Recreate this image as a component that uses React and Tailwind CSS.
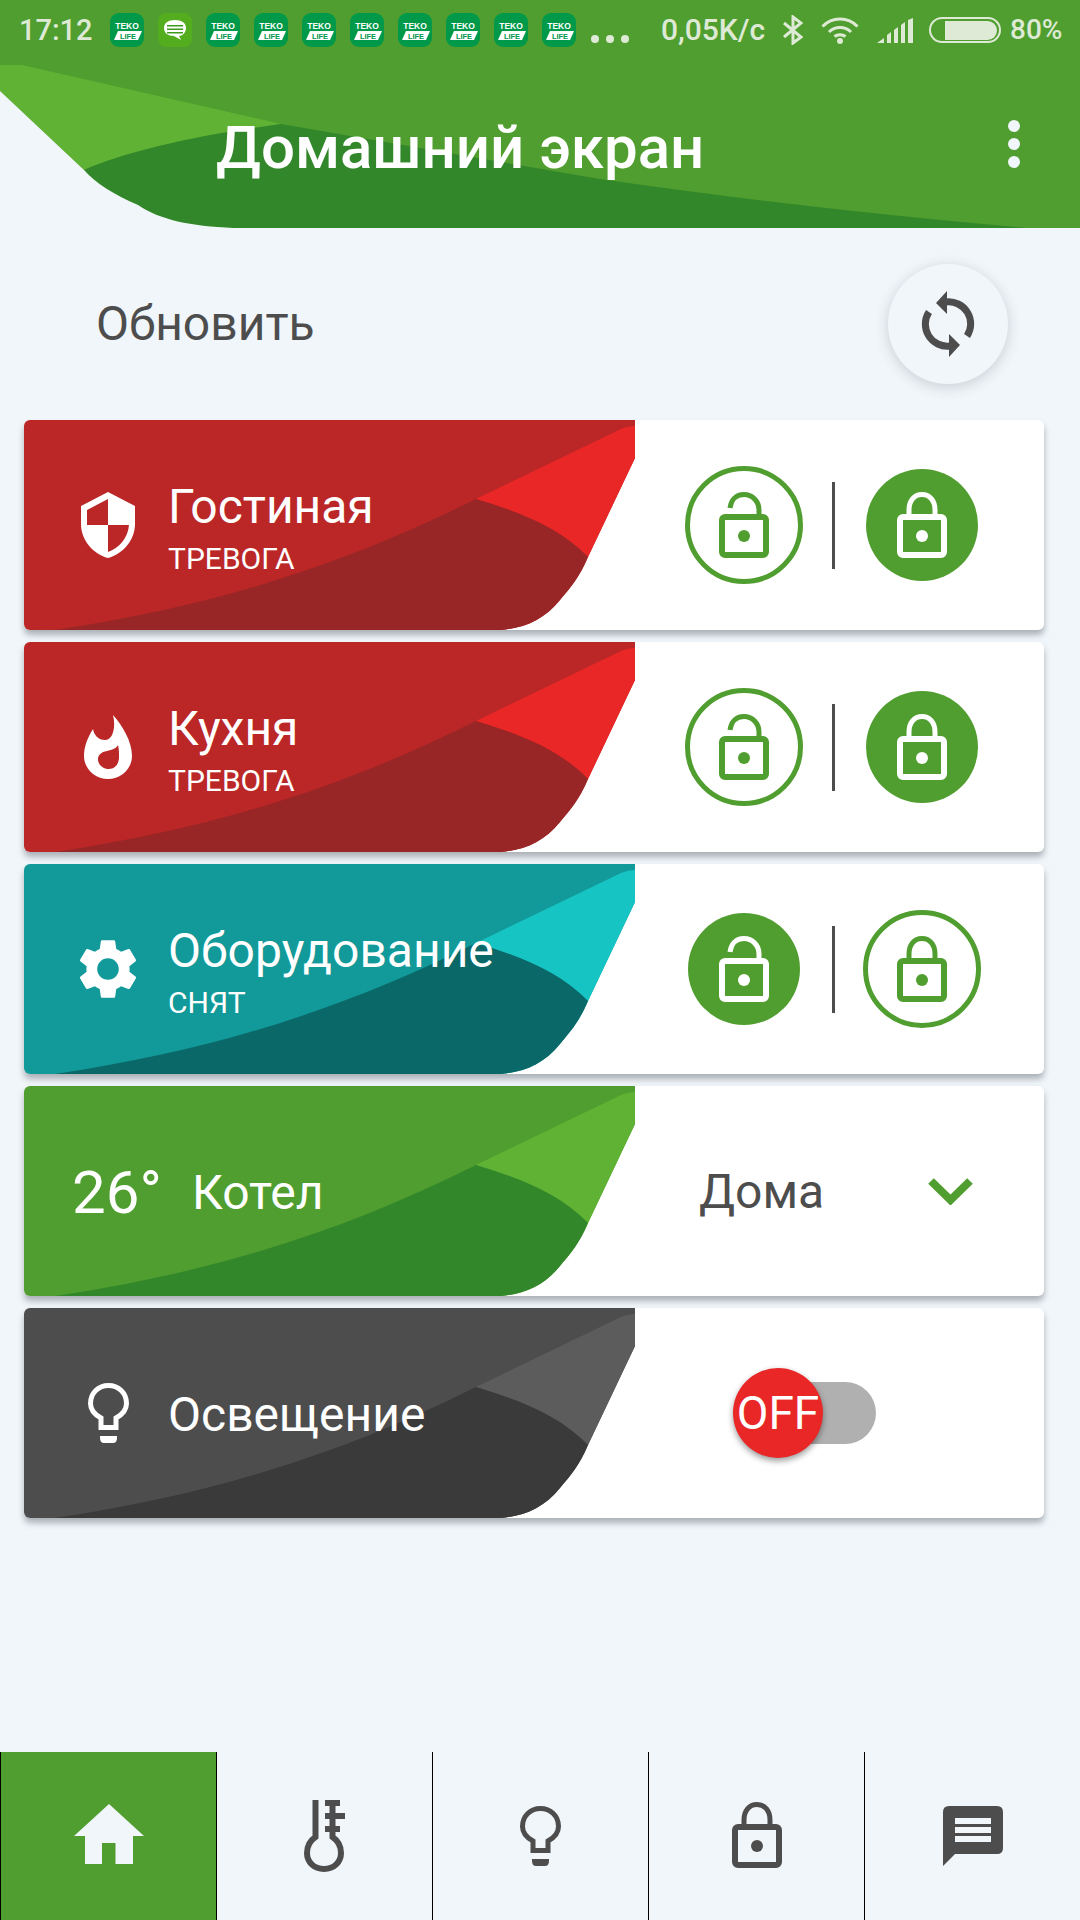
import React from "react";

const GREEN = "#509e2f";
const DARK = "#4d4d4d";
const PAGE = "#f1f6fa";

const RED = { base: "#bb2727", light: "#ea2727", dark: "#982626" };
const TEAL = { base: "#129999", light: "#17c4c4", dark: "#0b6868" };
const LEAF = { base: "#509e2f", light: "#5fb233", dark: "#33872b" };
const GRAY = { base: "#4d4d4d", light: "#5c5c5c", dark: "#3a3a3a" };

const Ribbon = ({ colors }) => (
  <svg className="absolute inset-0" width="611" height="210" viewBox="0 0 611 210">
    <path d="M0 0H611V38L564 137C555 158 546 168 536 180C520 200 500 208 477 210H0Z" fill={colors.base} />
    <path d="M452 79L597 9Q604 6 611 6V38L564 137C535 107 495 92 452 79Z" fill={colors.light} />
    <path d="M31 210C200 185 330 140 452 79C495 92 535 107 564 137C555 158 546 168 536 180C520 200 500 208 477 210Z" fill={colors.dark} />
  </svg>
);

const LockIcon = ({ open, color, className = "w-[50px] h-[66px]" }) => (
  <svg className={className} viewBox="-25 -34 50 66" fill="none">
    <rect x="-22" y="-9" width="44" height="38" rx="3" stroke={color} strokeWidth="6" />
    {open ? (
      <path d="M15 -10V-16C15 -25 8 -31.5 0 -31.5C-8 -31.5 -13 -26 -14 -18" stroke={color} strokeWidth="5" />
    ) : (
      <path d="M-13 -10V-16C-13 -25 -8 -31.5 0 -31.5C8 -31.5 13 -25 13 -16V-10" stroke={color} strokeWidth="5" />
    )}
    <circle cx="0" cy="10" r="6" fill={color} />
  </svg>
);

const LockOutline = ({ open }) => (
  <div className="w-[118px] h-[118px] flex items-center justify-center">
    <div className="w-[118px] h-[118px] rounded-full border-[5px] border-[#509e2f] flex items-center justify-center">
      <LockIcon open={open} color={GREEN} />
    </div>
  </div>
);

const LockFilled = ({ open }) => (
  <div className="w-[118px] h-[118px] flex items-center justify-center">
    <div className="w-[112px] h-[112px] rounded-full bg-[#509e2f] flex items-center justify-center">
      <LockIcon open={open} color="#ffffff" />
    </div>
  </div>
);

const LockPair = ({ armed }) => (
  <div className="ml-[50px] flex items-center gap-[29px] h-full">
    {armed ? <LockOutline open /> : <LockFilled open />}
    <div className="w-[3px] h-[87px] -mr-[1px] bg-[#4d4d4d]"></div>
    {armed ? <LockFilled /> : <LockOutline />}
  </div>
);

const ShieldIcon = () => (
  <svg width="54" height="66" viewBox="0 0 54 66">
    <path
      fillRule="evenodd"
      fill="#ffffff"
      d="M27 0L54 14V32C54 48 42 62 27 66C12 62 0 48 0 32V14ZM27 7L6 18V33H27ZM27 33V60C38 56 47 46 48 33Z"
    />
  </svg>
);

const FlameIcon = () => (
  <svg width="48" height="64" viewBox="0 0 48 64">
    <path
      fillRule="evenodd"
      fill="#ffffff"
      d="M29 0C38 10 48 26 48 41C48 54 37 64 24 64C11 64 0 54 0 41C0 31 4 22 9 14C10 20 14 25 21 25C29 25 32 12 29 0ZM34 30C33 33 28 35 23 36C17 37 14 40 14 44C14 50 19 54 25 54C31 54 35 49 35 42C35 38 35 34 34 30Z"
    />
  </svg>
);

const GearIcon = () => (
  <svg width="58" height="60" viewBox="2.4 2 19.2 20">
    <path
      fill="#ffffff"
      d="M19.14 12.94c.04-.3.06-.61.06-.94 0-.32-.02-.64-.07-.94l2.03-1.58c.18-.14.23-.41.12-.61l-1.92-3.32c-.12-.22-.37-.29-.59-.22l-2.39.96c-.5-.38-1.03-.7-1.62-.94l-.36-2.54c-.04-.24-.24-.41-.48-.41h-3.84c-.24 0-.43.17-.47.41l-.36 2.54c-.59.24-1.13.57-1.62.94l-2.39-.96c-.22-.08-.47 0-.59.22L2.74 8.87c-.12.21-.08.47.12.61l2.03 1.58c-.05.3-.09.63-.09.94s.02.64.07.94l-2.03 1.58c-.18.14-.23.41-.12.61l1.92 3.32c.12.22.37.29.59.22l2.39-.96c.5.38 1.03.7 1.62.94l.36 2.54c.05.24.24.41.48.41h3.84c.24 0 .44-.17.47-.41l.36-2.54c.59-.24 1.13-.56 1.62-.94l2.39.96c.22.08.47 0 .59-.22l1.92-3.32c.12-.22.07-.47-.12-.61l-2.01-1.58zM12 15.6c-1.98 0-3.6-1.62-3.6-3.6s1.62-3.6 3.6-3.6 3.6 1.62 3.6 3.6-1.62 3.6-3.6 3.6z"
    />
  </svg>
);

const BulbIcon = ({ color }) => (
  <svg width="41" height="60" viewBox="0 0 41 60" fill="none">
    <path
      d="M13 44.5V35C6.5 31.5 2.5 27 2.5 20.5C2.5 10 10.5 2.5 20.5 2.5C30.5 2.5 38.5 10 38.5 20.5C38.5 27 34.5 31.5 28 35V44.5Z"
      stroke={color}
      strokeWidth="5"
    />
    <path d="M12 53H29V55Q29 60 25 60H16Q12 60 12 55Z" fill={color} />
  </svg>
);

const ThermoIcon = () => (
  <svg width="42" height="72" viewBox="0 0 42 72" fill="none">
    <path
      d="M11.5 0V37C5.5 41 3 47 3 53C3 62 10 69 20 69C30 69 37 62 37 53C37 47 34.5 41 28.5 37V4"
      stroke={DARK}
      strokeWidth="6"
    />
    <path d="M21 0H36V6H21ZM21 13H41V19H21ZM21 26H36V32H21Z" fill={DARK} />
  </svg>
);

const HomeIcon = () => (
  <svg width="70" height="60" viewBox="0 0 70 60">
    <path d="M35 0L70 32H59V60H41.5V39H28V60H11V32H0Z" fill={PAGE} />
  </svg>
);

const ChatIcon = () => (
  <svg width="60" height="60" viewBox="0 0 60 60">
    <path
      fillRule="evenodd"
      fill={DARK}
      d="M6 0H54Q60 0 60 6V42Q60 48 54 48H12L0 60V6Q0 0 6 0ZM12 12V18H48V12ZM12 21V27H48V21ZM12 30V36H48V30Z"
    />
  </svg>
);

const SyncIcon = () => (
  <svg width="60" height="70" viewBox="-30 -35 60 70" fill="none">
    <path d="M-2 -22A22 22 0 0 1 19 12" stroke={DARK} strokeWidth="7" />
    <path d="M2 22A22 22 0 0 1 -19 -12" stroke={DARK} strokeWidth="7" />
    <path d="M-1 -33L-12 -21L-1 -10Z" fill={DARK} />
    <path d="M1 33L12 21L1 10Z" fill={DARK} />
  </svg>
);

const TekoBadge = () => (
  <div className="w-[34px] h-[34px] rounded-[9px] bg-[#00994a] shrink-0">
    <svg width="34" height="34" viewBox="0 0 34 34">
      <text x="17" y="16" textAnchor="middle" fontSize="8.5" fontWeight="700" fontFamily="Liberation Sans" fill="#ffffff">
        TEKO
      </text>
      <polygon points="4,27 8,18 32,18 28,27" fill="#ffffff" />
      <text x="18" y="26" textAnchor="middle" fontSize="7.5" fontWeight="700" fontFamily="Liberation Sans" fill="#00994a">
        LIFE
      </text>
    </svg>
  </div>
);

const MsgBadge = () => (
  <div className="w-[34px] h-[34px] rounded-[8px] bg-[#54ad1e] shrink-0 flex items-center justify-center">
    <svg width="34" height="34" viewBox="0 0 34 34">
      <path d="M17 7C24 7 28 10 28 15C28 20 24 23 21 23L23 27L16 23C10 23 6 20 6 15C6 10 10 7 17 7Z" fill="#ffffff" />
      <path d="M9 12H25V13.5H9ZM9 15.5H25V17H9ZM9 19H25V20.5H9Z" fill="#3e9a1a" />
    </svg>
  </div>
);

const StatusBar = () => (
  <div className="relative h-[60px] flex items-center font-medium text-[#deead6] pl-[19px]">
    <span className="w-[91px] text-[29px] leading-none">17:12</span>
    <div className="flex gap-[14px]">
      <TekoBadge />
      <MsgBadge />
      <TekoBadge />
      <TekoBadge />
      <TekoBadge />
      <TekoBadge />
      <TekoBadge />
      <TekoBadge />
      <TekoBadge />
      <TekoBadge />
    </div>
    <div className="ml-[15px] mt-[18px] flex gap-[7px]">
      <div className="w-[8px] h-[8px] rounded-full bg-[#deead6]"></div>
      <div className="w-[8px] h-[8px] rounded-full bg-[#deead6]"></div>
      <div className="w-[8px] h-[8px] rounded-full bg-[#deead6]"></div>
    </div>
    <span className="ml-[32px] w-[103px] text-[30px] leading-none whitespace-nowrap">0,05K/с</span>
    <svg className="ml-[19px]" width="20" height="30" viewBox="0 0 20 30" fill="none">
      <path d="M1 8L18 22L10 28V2L18 8L1 22" stroke="#deead6" strokeWidth="3" />
    </svg>
    <svg className="ml-[18px]" width="38" height="27" viewBox="0 0 38 27" fill="none">
      <path d="M1.5 9.5C11 -0.5 27 -0.5 36.5 9.5" stroke="#deead6" strokeWidth="3" />
      <path d="M8 15C14 9 24 9 30 15" stroke="#deead6" strokeWidth="3" />
      <path d="M13.5 19.5C16.5 17 21.5 17 24.5 19.5" stroke="#deead6" strokeWidth="3" />
      <circle cx="19" cy="24" r="3" fill="#deead6" />
    </svg>
    <svg className="ml-[18px]" width="37" height="25" viewBox="0 0 37 25">
      <path d="M0 25L7 20V25ZM10 17L14 14V25H10ZM17 12L21 9V25H17ZM24 7L28 4V25H24ZM31 2L36 0V25H31Z" fill="#deead6" />
    </svg>
    <div className="ml-[15px] w-[72px] h-[26px] rounded-full border-2 border-[#deead6] flex items-center justify-end pr-[2px]">
      <div className="w-[52px] h-[19px] rounded-r-full bg-[#deead6]"></div>
    </div>
    <span className="ml-[9px] text-[28px] leading-none">80%</span>
  </div>
);

const Header = () => (
  <div className="relative h-[228px] bg-[#509e2f] shrink-0">
    <svg className="absolute inset-0" width="1080" height="228" viewBox="0 0 1080 228">
      <path d="M0 65H22L281 124C200 135 130 150 84 170L0 91Z" fill="#5fb233" />
      <path d="M84 170C130 150 200 135 281 124L600 179Q800 208 1027 228H233C190 226 160 220 138 205C115 195 95 183 84 170Z" fill="#33872b" />
      <path d="M0 91L84 170C95 183 115 195 138 205C160 220 190 226 233 228H0Z" fill={PAGE} />
    </svg>
    <StatusBar />
    <div className="relative flex justify-between h-[168px] pl-[216px] pr-[60px]">
      <h1 className="mt-[48px] text-[60px] font-medium leading-[80px] text-white">Домашний экран</h1>
      <div className="pt-[60px] flex flex-col gap-[6px]">
        <div className="w-[12px] h-[12px] rounded-full bg-[#f1f6fa]"></div>
        <div className="w-[12px] h-[12px] rounded-full bg-[#f1f6fa]"></div>
        <div className="w-[12px] h-[12px] rounded-full bg-[#f1f6fa]"></div>
      </div>
    </div>
  </div>
);

const Card = ({ colors, children, right }) => (
  <div className="flex h-[210px] rounded-[6px] overflow-hidden bg-white shadow-[0_5px_6px_rgba(40,50,60,0.35)]">
    <div className="relative w-[611px] shrink-0">
      <Ribbon colors={colors} />
      <div className="relative flex items-center h-full text-white">{children}</div>
    </div>
    <div className="flex-1 min-w-0">{right}</div>
  </div>
);

const IconBox = ({ children }) => (
  <div className="w-[144px] pl-[24px] flex items-center justify-center shrink-0">{children}</div>
);

const ZoneText = ({ title, status }) => (
  <div className="whitespace-nowrap pt-[10px]">
    <div className="text-[48px] leading-[50px]">{title}</div>
    <div className="mt-[7px] text-[30px] leading-[40px]">{status}</div>
  </div>
);

const App = () => {
  return (
    <div className="w-[1080px] h-[1920px] flex flex-col bg-[#f1f6fa] overflow-hidden font-['Roboto',sans-serif]">
      <Header />

      <div className="h-[192px] shrink-0 flex items-center justify-between pl-[96px] pr-[72px]">
        <span className="text-[48px] text-[#4d4d4d]">Обновить</span>
        <div className="w-[120px] h-[120px] rounded-full bg-[#f1f6fa] flex items-center justify-center shadow-[0_3px_14px_rgba(40,50,60,0.2)]">
          <SyncIcon />
        </div>
      </div>

      <div className="flex flex-col gap-[12px] pl-[24px] pr-[36px]">
        <Card colors={RED} right={<LockPair armed />}>
          <IconBox><ShieldIcon /></IconBox>
          <ZoneText title="Гостиная" status="ТРЕВОГА" />
        </Card>
        <Card colors={RED} right={<LockPair armed />}>
          <IconBox><FlameIcon /></IconBox>
          <ZoneText title="Кухня" status="ТРЕВОГА" />
        </Card>
        <Card colors={TEAL} right={<LockPair />}>
          <IconBox><GearIcon /></IconBox>
          <ZoneText title="Оборудование" status="СНЯТ" />
        </Card>
        <Card
          colors={LEAF}
          right={
            <div className="h-full flex items-center pl-[64px] pr-[71px] justify-between">
              <span className="text-[48px] text-[#4d4d4d] pt-[2px]">Дома</span>
              <svg width="45" height="27" viewBox="0 0 45 27" fill="none">
                <path d="M3 3L22.5 22L42 3" stroke={GREEN} strokeWidth="8" />
              </svg>
            </div>
          }
        >
          <span className="ml-[48px] w-[120px] text-[60px] leading-none pt-[3px]">26°</span>
          <span className="text-[48px] pt-[3px]">Котел</span>
        </Card>
        <Card
          colors={GRAY}
          right={
            <div className="h-full flex items-center pl-[98px]">
              <div className="relative w-[143px] h-[90px] flex items-center">
                <div className="ml-[40px] w-[103px] h-[62px] rounded-r-full bg-[#b0b0b0]"></div>
                <div className="absolute left-0 top-0 w-[90px] h-[90px] rounded-full bg-[#ea2727] flex items-center justify-center text-white text-[46px] leading-none shadow-[0_3px_6px_rgba(0,0,0,0.4)]">
                  OFF
                </div>
              </div>
            </div>
          }
        >
          <IconBox><BulbIcon color="#ffffff" /></IconBox>
          <span className="text-[48px] pt-[3px]">Освещение</span>
        </Card>
      </div>

      <div className="mt-auto h-[168px] grid grid-cols-5 shrink-0">
        <div className="bg-[#509e2f] border-l border-black flex items-center justify-center pb-[4px]">
          <HomeIcon />
        </div>
        <div className="border-l border-black flex items-center justify-center">
          <ThermoIcon />
        </div>
        <div className="border-l border-black flex items-center justify-center">
          <BulbIcon color={DARK} />
        </div>
        <div className="border-l border-black flex items-center justify-center pb-[3px]">
          <LockIcon color={DARK} />
        </div>
        <div className="border-l border-black flex items-center justify-center">
          <ChatIcon />
        </div>
      </div>
    </div>
  );
};

export default App;
